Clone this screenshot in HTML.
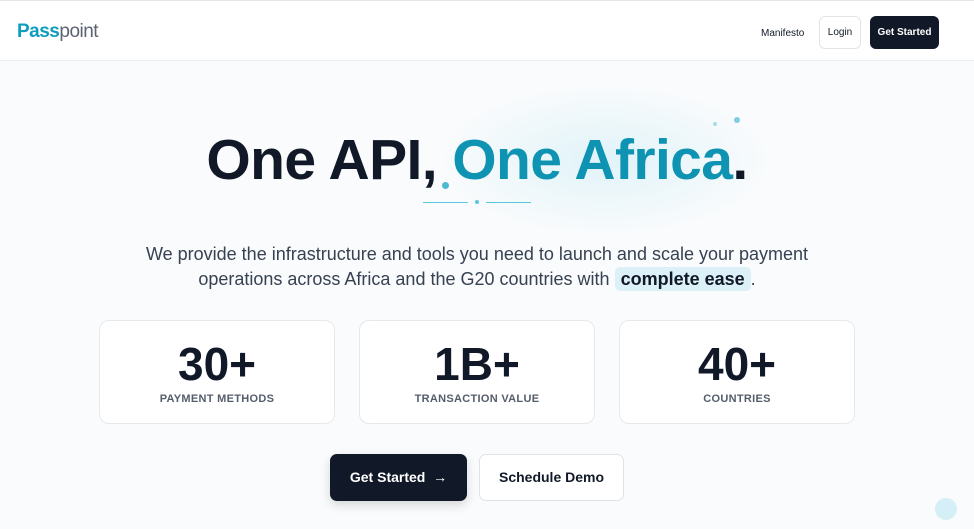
<!DOCTYPE html>
<html><head><style>
*{margin:0;padding:0;box-sizing:border-box}
body{width:974px;height:529px;overflow:hidden;background:#f9fbfc;font-family:"Liberation Sans",sans-serif;position:relative;color:#111827}
.top{position:absolute;left:0;top:0;width:974px;height:61px;background:#fff;border-top:1px solid #e3e5e8;border-bottom:1px solid #eceef1}
.logo{position:absolute;left:17px;top:20px;font-size:19px;color:#5b6470;letter-spacing:-0.5px}
.logo b{color:#0e9dbf}
.nav{position:absolute;font-size:10px}
.login{position:absolute;left:819px;top:15px;width:42px;height:33px;border:1px solid #e2e4e8;border-radius:6px;background:#fff;font-size:10px;text-align:center;line-height:31px}
.gs{position:absolute;left:870px;top:15px;width:69px;height:33px;background:#111827;border-radius:6px;color:#fff;font-size:10px;font-weight:bold;text-align:center;line-height:33px}
h1{position:absolute;left:-10px;width:974px;top:127px;text-align:center;font-size:57px;font-weight:bold;letter-spacing:-0.6px;color:#111827}
h1 span{color:#0e93b3}
.line{position:absolute;top:202px;height:1px;background:#5cc6de}
p{position:absolute;left:-10px;width:974px;top:242px;text-align:center;font-size:18px;line-height:25px;color:#374151}
.ease{background:#dbf1f7;border-radius:5px;padding:2px 6px;color:#111827;font-weight:bold}
.card{position:absolute;top:320px;width:236px;height:104px;background:#fff;border:1px solid #e6e8eb;border-radius:10px;text-align:center}
.card .n{font-size:46px;font-weight:bold;margin-top:17px;line-height:52px;color:#111827}
.card .l{font-size:11px;color:#374151;margin-top:3px;letter-spacing:0.3px;font-weight:bold;opacity:.85}
.b1{position:absolute;left:330px;top:454px;width:137px;height:47px;background:#111827;color:#fff;border-radius:7px;font-size:14px;font-weight:bold;text-align:center;line-height:47px;box-shadow:0 4px 10px rgba(0,0,0,.15)}
.b2{position:absolute;left:479px;top:454px;width:145px;height:47px;background:#fff;border:1px solid #dfe2e6;border-radius:7px;font-size:14px;font-weight:bold;text-align:center;line-height:45px;color:#111827}
.dot{position:absolute;border-radius:50%;background:#a9dbe8}
</style></head><body>
<div class="top">
<div class="logo"><b>Pass</b>point</div>
<div class="nav" style="left:761px;top:27px">Manifesto</div>
<div class="login">Login</div>
<div class="gs">Get Started</div>
</div>
<div style="position:absolute;left:440px;top:85px;width:330px;height:150px;border-radius:50%;background:radial-gradient(ellipse,rgba(200,235,245,.5),rgba(249,251,252,0) 70%)"></div>
<h1>One API, <span>One Africa</span>.</h1>
<div class="dot" style="left:442px;top:182px;width:7px;height:7px;background:#4fb8d3"></div>
<div class="line" style="left:423px;width:45px"></div>
<div class="dot" style="left:475px;top:200px;width:4px;height:4px;background:#5cc6de"></div>
<div class="line" style="left:486px;width:45px"></div>
<div class="dot" style="left:734px;top:117px;width:6px;height:6px;background:#7fcde0"></div>
<div class="dot" style="left:713px;top:122px;width:4px;height:4px"></div>
<div class="dot" style="left:935px;top:498px;width:22px;height:22px;background:#d5eff6"></div>
<p>We provide the infrastructure and tools you need to launch and scale your payment<br>operations across Africa and the G20 countries with <span class="ease">complete ease</span>.</p>
<div class="card" style="left:99px"><div class="n">30+</div><div class="l">PAYMENT METHODS</div></div>
<div class="card" style="left:359px"><div class="n">1B+</div><div class="l">TRANSACTION VALUE</div></div>
<div class="card" style="left:619px"><div class="n">40+</div><div class="l">COUNTRIES</div></div>
<div class="b1">Get Started &nbsp;→</div>
<div class="b2">Schedule Demo</div>
</body></html>
